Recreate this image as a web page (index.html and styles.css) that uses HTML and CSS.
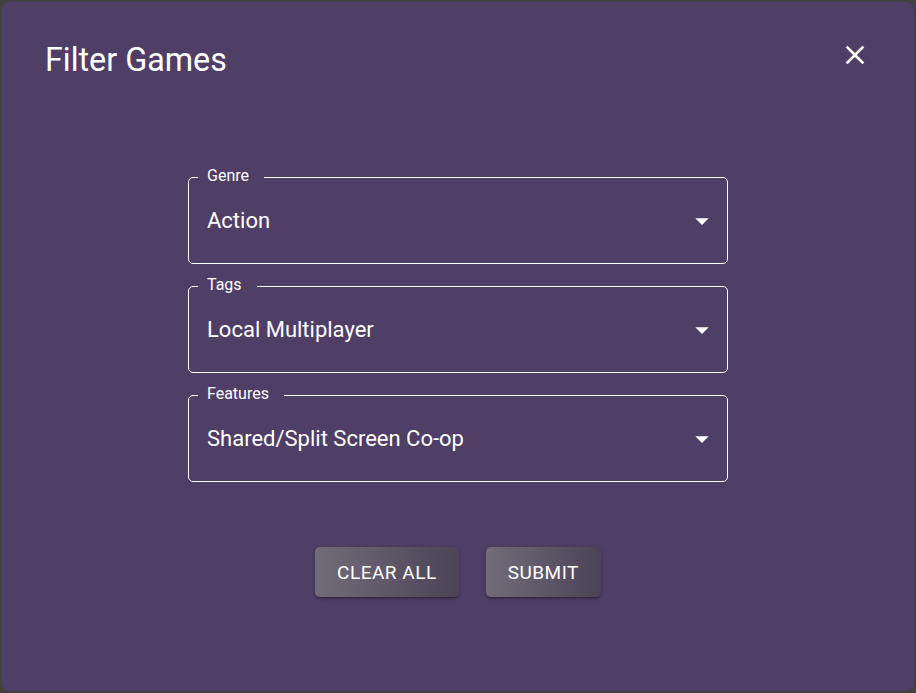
FILE: index.html
```html
<!DOCTYPE html>
<html lang="en">
<head>
<meta charset="utf-8">
<title>Filter Games</title>
<link rel="stylesheet" href="styles.css">
</head>
<body>
<div class="dialog">
  <header class="dialog-header">
    <h2 class="dialog-title">Filter Games</h2>
    <button class="close-btn" aria-label="Close">
      <svg viewBox="0 0 24 24" width="32" height="32"><path fill="#fff" d="M19 6.41 17.59 5 12 10.59 6.41 5 5 6.41 10.59 12 5 17.59 6.41 19 12 13.41 17.59 19 19 17.59 13.41 12z"/></svg>
    </button>
  </header>
  <div class="fields">
    <fieldset class="field">
      <legend class="field-label">Genre</legend>
      <div class="field-row">
        <span class="field-value">Action</span>
        <svg class="arrow" viewBox="0 0 24 24" width="32" height="32"><path fill="#fff" d="M7 10l5 5 5-5z"/></svg>
      </div>
    </fieldset>
    <fieldset class="field">
      <legend class="field-label">Tags</legend>
      <div class="field-row">
        <span class="field-value">Local Multiplayer</span>
        <svg class="arrow" viewBox="0 0 24 24" width="32" height="32"><path fill="#fff" d="M7 10l5 5 5-5z"/></svg>
      </div>
    </fieldset>
    <fieldset class="field">
      <legend class="field-label">Features</legend>
      <div class="field-row">
        <span class="field-value">Shared/Split Screen Co-op</span>
        <svg class="arrow" viewBox="0 0 24 24" width="32" height="32"><path fill="#fff" d="M7 10l5 5 5-5z"/></svg>
      </div>
    </fieldset>
  </div>
  <div class="actions">
    <button class="btn">CLEAR ALL</button>
    <button class="btn">SUBMIT</button>
  </div>
</div>
</body>
</html>
```

FILE: styles.css
```css
html, body {
  margin: 0;
  padding: 0;
}
body {
  background: #424242;
  font-family: Roboto, "Noto Sans", sans-serif;
  color: #fff;
  width: 916px;
  height: 693px;
  overflow: hidden;
}
.dialog {
  margin: 2px;
  width: 912px;
  height: 689px;
  background: #4f3e66;
  border-radius: 8px;
  box-sizing: border-box;
}
.dialog-header {
  display: flex;
  justify-content: space-between;
  align-items: flex-start;
  padding: 35px 43px 0 43px;
}
.dialog-title {
  margin: 4px 0 0;
  font-size: 32.3px;
  line-height: 38px;
  font-weight: 400;
}
.close-btn {
  margin-top: 2px;
  padding: 0;
  border: 0;
  background: none;
  display: block;
  width: 32px;
  height: 32px;
  cursor: pointer;
}
.close-btn svg {
  display: block;
}
.fields {
  margin-top: 89px;
  display: flex;
  flex-direction: column;
  align-items: center;
  gap: 13px;
}
.field {
  width: 540px;
  box-sizing: border-box;
  margin: 0;
  padding: 0;
  border: 1px solid #fff;
  border-radius: 5px;
  min-width: 0;
}
.field-label {
  margin-left: 9px;
  padding: 0 15px 4px 9px;
  font-size: 16px;
  line-height: 15px;
}
.field-row {
  display: flex;
  justify-content: space-between;
  align-items: center;
  padding: 21px 9px 30px 18px;
  height: 25px;
}
.field-value {
  font-size: 22px;
  line-height: 25px;
}
.arrow {
  display: block;
  margin: -4px 0;
}
.actions {
  margin-top: 65px;
  display: flex;
  justify-content: center;
  gap: 27px;
}
.btn {
  height: 50px;
  padding: 0 22px;
  border: 0;
  border-radius: 5px;
  color: #fff;
  font-family: Roboto, "Noto Sans", sans-serif;
  font-size: 19px;
  font-weight: 400;
  letter-spacing: 0.5px;
  background: linear-gradient(90deg, #726c7a 0%, #4b4356 100%);
  box-shadow: 0 3px 1px -2px rgba(0,0,0,.2), 0 2px 2px 0 rgba(0,0,0,.14), 0 1px 5px 0 rgba(0,0,0,.12);
  cursor: pointer;
}
```
